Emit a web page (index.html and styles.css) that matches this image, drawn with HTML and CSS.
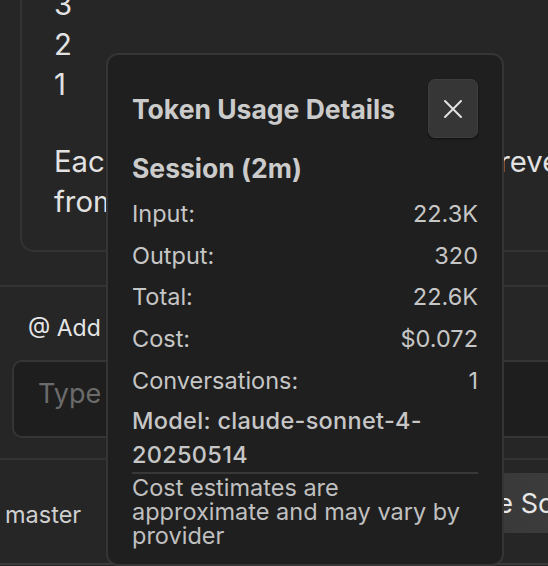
FILE: index.html
```html
<!DOCTYPE html>
<html lang="en">
<head>
<meta charset="utf-8">
<title>Token Usage Details</title>
<link rel="stylesheet" href="styles.css">
</head>
<body>
<div class="app">
  <div class="messages">
    <div class="bubble">
      <p class="countdown">3<br>2<br>1</p>
      <p class="explain">Each number, on its own line, in reverse<br>from three down to one.</p>
    </div>
  </div>
  <div class="composer">
    <div class="context">@ Add context</div>
    <div class="input">Type your message here...</div>
  </div>
  <div class="statusbar">
    <span class="branch">master</span>
    <button class="source">Change Source</button>
  </div>
</div>

<div class="popup">
  <div class="popup-head">
    <h2>Token Usage Details</h2>
    <button class="close" aria-label="Close">
      <svg width="20" height="20" viewBox="0 0 20 20"><path d="M2 2 L18 18 M18 2 L2 18" stroke="#e2e2e2" stroke-width="2" stroke-linecap="round" fill="none"/></svg>
    </button>
  </div>
  <h3>Session (2m)</h3>
  <div class="row"><span>Input:</span><span>22.3K</span></div>
  <div class="row"><span>Output:</span><span>320</span></div>
  <div class="row"><span>Total:</span><span>22.6K</span></div>
  <div class="row"><span>Cost:</span><span>$0.072</span></div>
  <div class="row"><span>Conversations:</span><span>1</span></div>
  <div class="model">Model: claude-sonnet-4-20250514</div>
  <div class="note">Cost estimates are approximate and may vary by provider</div>
</div>
</body>
</html>
```

FILE: styles.css
```css
* { box-sizing: border-box; }
html, body {
  margin: 0;
  padding: 0;
  width: 548px;
  height: 566px;
  overflow: hidden;
  background: #262626;
  font-family: Inter, "Noto Sans", sans-serif;
}
body { position: relative; }
.app {
  width: 631px;
  display: flex;
  flex-direction: column;
}
.messages {
  padding: 0 0 33px 20px;
}
.bubble {
  margin-top: -15px;
  border: 2px solid #333333;
  border-top: none;
  border-radius: 0 0 14px 14px;
  padding: 0 20px 28px 32px;
  color: #e2e2e2;
  font-size: 29.3px;
  line-height: 40px;
}
.bubble p { margin: 0; white-space: nowrap; }
.countdown { margin-bottom: 37px !important; }
.composer {
  border-top: 2px solid #333333;
  padding: 26px 0 20px 12px;
}
.context {
  color: #e6e6e6;
  font-size: 23px;
  line-height: 30px;
  padding-left: 16px;
  margin-bottom: 17px;
}
.input {
  height: 78px;
  border: 2px solid #353535;
  border-radius: 10px;
  background: #1e1e1e;
  color: #6b6b6b;
  font-size: 27px;
  padding: 15px 0 0 24px;
  white-space: nowrap;
}
.statusbar {
  border-top: 2px solid #333333;
  border-bottom: 2px solid #3a3a3a;
  height: 107px;
  display: flex;
  align-items: flex-start;
  justify-content: space-between;
  padding-top: 13px;
}
.branch {
  color: #cfcfcf;
  font-size: 23.5px;
  line-height: 30px;
  padding: 27px 0 0 5px;
}
.source {
  height: 60px;
  padding: 0 20px;
  border: none;
  border-radius: 8px;
  background: linear-gradient(to right, #363636, #3e3e3e);
  color: #e6e6e6;
  font-family: inherit;
  font-size: 27px;
  white-space: nowrap;
}
.popup {
  position: absolute;
  left: 106px;
  top: 53px;
  width: 398px;
  height: 513px;
  background: #1f1f1f;
  border: 2px solid #353535;
  border-radius: 12px;
  padding: 24px 24px 0 24px;
  color: #c6c6c6;
}
.popup-head {
  display: flex;
  justify-content: space-between;
  align-items: center;
}
.popup h2 {
  margin: 0;
  font-size: 26.5px;
  font-weight: 700;
  color: #cbcbcb;
}
.close {
  width: 50px;
  height: 59px;
  background: #363636;
  border: 1px solid #3e3e3e;
  border-radius: 7px;
  display: flex;
  align-items: center;
  justify-content: center;
  padding: 0;
  box-shadow: 0 1px 2px rgba(0,0,0,0.5);
}
.popup h3 {
  margin: 13px 0 8px;
  font-size: 26.5px;
  line-height: 34px;
  font-weight: 700;
  color: #cbcbcb;
}
.row {
  display: flex;
  justify-content: space-between;
  font-size: 23.5px;
  line-height: 41.7px;
  height: 41.7px;
}
.model {
  margin-top: 3px;
  font-size: 23.5px;
  font-weight: 500;
  line-height: 34px;
  letter-spacing: 0.3px;
  padding-right: 40px;
  border-bottom: 2px solid #383838;
}
.note {
  font-size: 23.5px;
  line-height: 24px;
  padding-top: 2px;
  color: #c0c0c0;
}
```
